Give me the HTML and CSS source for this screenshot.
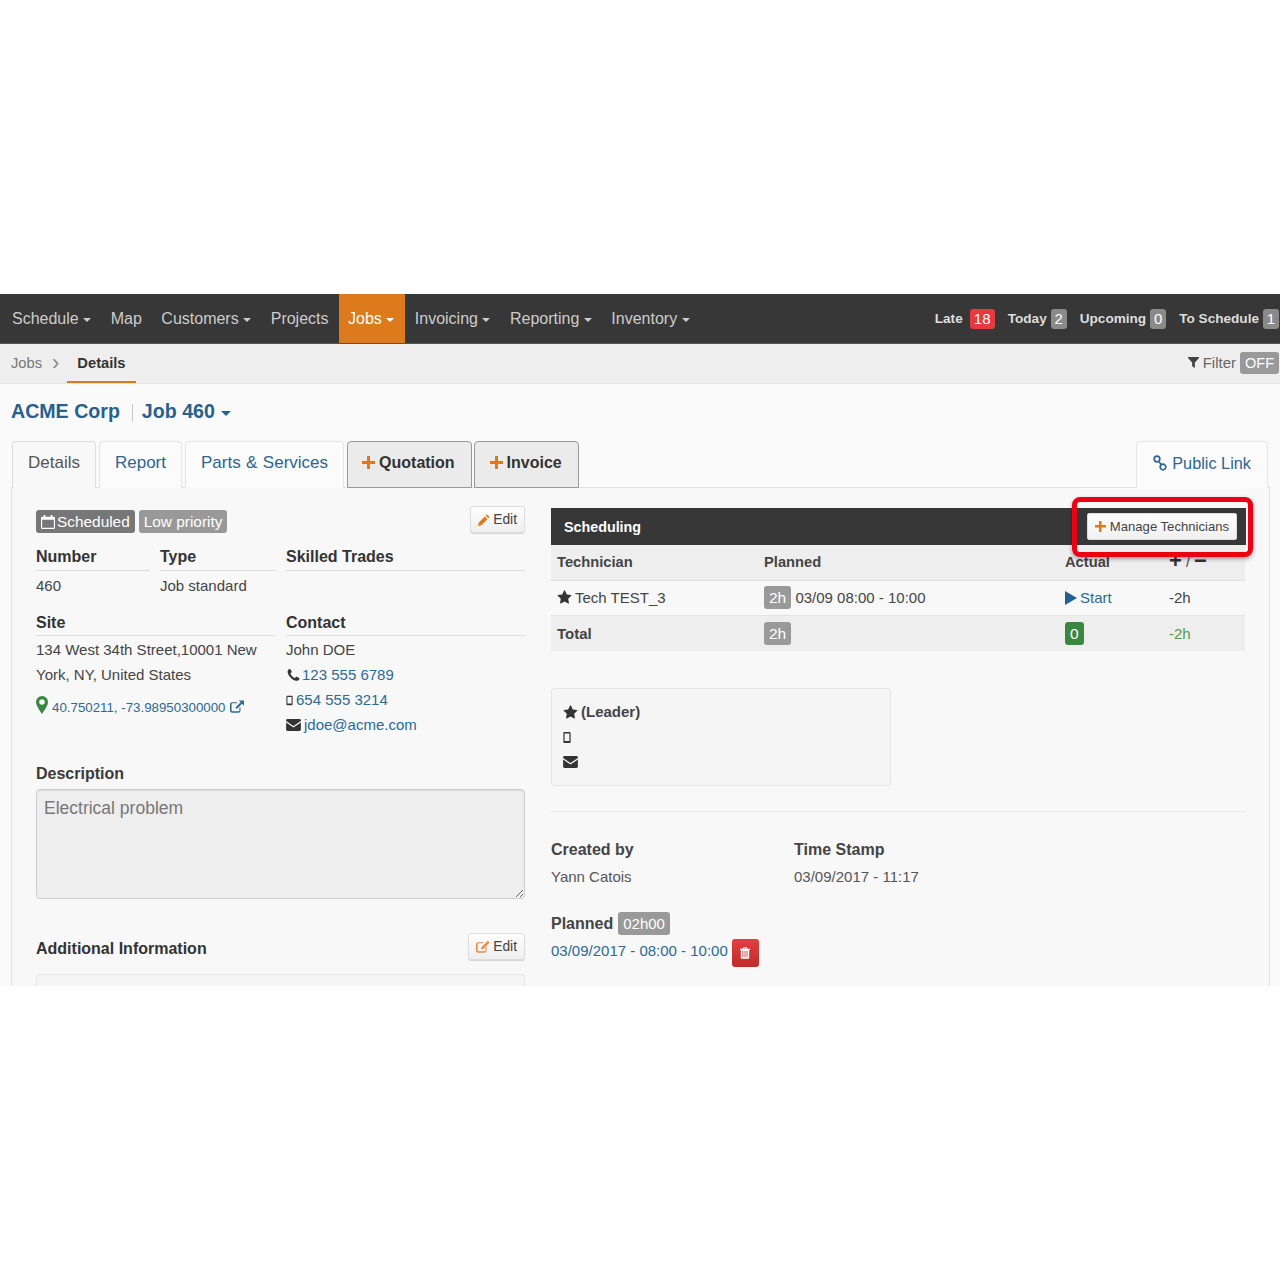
FILE: index.html
```html
<!DOCTYPE html>
<html lang="en">
<head>
<meta charset="utf-8">
<title>Job 460</title>
<link rel="stylesheet" href="styles.css">
</head>
<body>
<svg class="defs" width="0" height="0" aria-hidden="true">
  <symbol id="i-star" viewBox="0 0 1792 1792"><path d="M1728 647q0 22-26 48l-363 354 86 500q1 7 1 20 0 21-10.500 35.500T1385 1619q-19 0-40-12l-449-236-449 236q-22 12-40 12-21 0-31.500-14.500T365 1569q0-6 2-20l86-500L89 695q-25-27-25-48 0-37 56-46l502-73L847 73q19-41 49-41t49 41l225 455 502 73q56 9 56 46z"/></symbol>
  <symbol id="i-phone" viewBox="0 0 1792 1792"><path d="M1600 1240q0 27-10 70.500t-21 68.500q-21 50-122 106-94 51-186 51-27 0-53-3.500t-57.500-12.500-47-14.500-55.500-20.500-49-18q-98-35-175-83-127-79-264-216T344 904q-48-77-83-175-3-9-18-49t-20.500-55.500-14.500-47T195.500 520 192 467q0-92 51-186 56-101 106-122 25-11 68.500-21t70.500-10q14 0 21 3 18 6 53 76 11 19 30 54t35 63.500 31 53.500q3 4 17.500 25t21.500 35.500 7 28.500q0 20-28.500 50t-62 55-62 53-28.500 46q0 9 5 22.500t8.500 20.500 14 24 11.500 19q76 137 174 235t235 174q2 1 19 11.500t24 14 20.500 8.500 22.500 5q18 0 46-28.500t53-62 55-62 50-28.500q14 0 28.500 7t35.500 21.500 25 17.500q25 15 53.500 31t63.500 35 54 30q70 35 76 53 3 7 3 21z"/></symbol>
  <symbol id="i-mobile" viewBox="0 0 10 16"><path fill-rule="evenodd" d="M2 1h6a1.500 1.500 0 0 1 1.500 1.500v11A1.500 1.500 0 0 1 8 15H2a1.500 1.500 0 0 1-1.500-1.500v-11A1.500 1.500 0 0 1 2 1zm0 2v9.500h6V3z"/></symbol>
  <symbol id="i-env" viewBox="0 0 16 13"><path d="M1.500 0h13A1.500 1.500 0 0 1 16 1.500v.6L8 7.500 0 2.100v-.6A1.500 1.500 0 0 1 1.500 0z"/><path d="M0 3.900V11.500A1.500 1.500 0 0 0 1.500 13h13a1.500 1.500 0 0 0 1.500-1.500V3.900L8 9.300z"/></symbol>
  <symbol id="i-pin" viewBox="0 0 12 18"><path fill-rule="evenodd" d="M6 0a6 6 0 0 1 6 6c0 3-3.500 8.500-6 12C3.500 14.500 0 9 0 6a6 6 0 0 1 6-6zm0 3.200a2.800 2.800 0 1 0 0 5.600 2.800 2.800 0 0 0 0-5.600z"/></symbol>
  <symbol id="i-ext" viewBox="0 0 16 14"><path d="M2.500 2H8v1.300H2.800a1 1 0 0 0-1 1v7a1 1 0 0 0 1 1h7a1 1 0 0 0 1-1V8H12v3.500A2.500 2.500 0 0 1 9.500 14h-7A2.500 2.500 0 0 1 0 11.500v-7A2.500 2.500 0 0 1 2.500 2z"/><path d="M10 0h6v6l-2.200-2.200-6 6-1.600-1.600 6-6z"/></symbol>
  <symbol id="i-cal" viewBox="0 0 16 16"><path fill-rule="evenodd" d="M3 0h2v2h6V0h2v2h1.500A1.500 1.500 0 0 1 16 3.500v11a1.500 1.500 0 0 1-1.500 1.500h-13A1.500 1.500 0 0 1 0 14.500v-11A1.500 1.500 0 0 1 1.500 2H3zM1.300 5.500v9.200h13.400V5.500z"/></symbol>
  <symbol id="i-filter" viewBox="0 0 12 12"><path d="M0 0h12v1L7.500 6v6L4.500 10V6L0 1z"/></symbol>
  <symbol id="i-link" viewBox="0 0 16 16"><path fill="none" stroke="currentColor" stroke-width="1.700" d="M5 1.200a2.800 2.800 0 1 1 0 5.600 2.800 2.800 0 0 1 0-5.600zM11 9.200a2.800 2.800 0 1 1 0 5.600 2.800 2.800 0 0 1 0-5.600zM6 6l4 4"/></symbol>
  <symbol id="i-pencil" viewBox="0 0 14 14"><path d="M10.500 0.500 13.500 3.500 12 5 9 2zM8 3l3 3-7 7-4 1 1-4z"/></symbol>
  <symbol id="i-edit" viewBox="0 0 16 14"><path d="M2.500 2H9L7.700 3.300H2.800a1 1 0 0 0-1 1v7a1 1 0 0 0 1 1h7a1 1 0 0 0 1-1V8L12 6.700v4.800A2.500 2.500 0 0 1 9.500 14h-7A2.500 2.500 0 0 1 0 11.500v-7A2.500 2.500 0 0 1 2.500 2z"/><path d="M13.500 0.500 15.500 2.500 8 10H6V8z"/></symbol>
  <symbol id="i-trash" viewBox="0 0 12 14"><path fill-rule="evenodd" d="M4 0h4l1 2h3v1.300h-1V13a1 1 0 0 1-1 1H2a1 1 0 0 1-1-1V3.300H0V2h3zM4.500 1.200 4.100 2h3.800l-.4-.8zM3 4.500V12h1V4.500zm2.500 0V12h1V4.500zm2.500 0V12h1V4.500z"/></symbol>
</svg>

<div class="app">
  <nav class="topnav">
    <ul class="menu">
      <li class="menu-item">Schedule<span class="caret"></span></li>
      <li class="menu-item">Map</li>
      <li class="menu-item">Customers<span class="caret"></span></li>
      <li class="menu-item">Projects</li>
      <li class="menu-item active">Jobs<span class="caret"></span></li>
      <li class="menu-item">Invoicing<span class="caret"></span></li>
      <li class="menu-item">Reporting<span class="caret"></span></li>
      <li class="menu-item">Inventory<span class="caret"></span></li>
    </ul>
    <div class="counters">
      <span class="counter">Late <b class="count red wide">18</b></span>
      <span class="counter">Today <b class="count">2</b></span>
      <span class="counter">Upcoming <b class="count">0</b></span>
      <span class="counter">To Schedule <b class="count">1</b></span>
    </div>
  </nav>

  <div class="subbar">
    <div class="crumbs">
      <span class="crumb">Jobs</span>
      <span class="crumb-sep">›</span>
      <span class="crumb-current">Details</span>
    </div>
    <div class="filter">
      <svg class="ic ic-filter"><use href="#i-filter"/></svg>
      <span>Filter</span>
      <span class="off">OFF</span>
    </div>
  </div>

  <main class="content">
    <h1 class="title">
      <span>ACME Corp</span><span class="title-sep"></span><span>Job 460</span><span class="caret caret-title"></span>
    </h1>

    <div class="tabs">
      <a class="tab current">Details</a>
      <a class="tab">Report</a>
      <a class="tab parts">Parts &amp; Services</a>
      <a class="tab action"><span class="plus"></span>Quotation</a>
      <a class="tab action invoice"><span class="plus"></span>Invoice</a>
      <a class="tab public"><svg class="ic ic-link"><use href="#i-link"/></svg>Public Link</a>
    </div>

    <section class="panel">
      <div class="col-left">
        <div class="status-row">
          <div class="statuses">
            <span class="tag dark"><svg class="ic ic-cal"><use href="#i-cal"/></svg>Scheduled</span>
            <span class="tag">Low priority</span>
          </div>
          <button class="btn-edit"><svg class="ic ic-pencil"><use href="#i-pencil"/></svg>Edit</button>
        </div>

        <div class="fields three">
          <div><h3 class="field-head">Number</h3><p class="line">460</p></div>
          <div><h3 class="field-head">Type</h3><p class="line">Job standard</p></div>
          <div><h3 class="field-head">Skilled Trades</h3></div>
        </div>

        <div class="fields two">
          <div>
            <h3 class="field-head">Site</h3>
            <p class="line">134 West 34th Street,10001 New York, NY, United States</p>
            <p class="geo"><svg class="ic ic-pin"><use href="#i-pin"/></svg><a class="link">40.750211, -73.98950300000</a><svg class="ic ic-ext"><use href="#i-ext"/></svg></p>
          </div>
          <div>
            <h3 class="field-head">Contact</h3>
            <p class="line">John DOE</p>
            <p class="line"><svg class="ic ic-phone"><use href="#i-phone"/></svg><a class="link">123 555 6789</a></p>
            <p class="line"><svg class="ic ic-mobile"><use href="#i-mobile"/></svg><a class="link">654 555 3214</a></p>
            <p class="line"><svg class="ic ic-env"><use href="#i-env"/></svg><a class="link">jdoe@acme.com</a></p>
          </div>
        </div>

        <h3 class="desc-head">Description</h3>
        <textarea class="desc" readonly>Electrical problem</textarea>

        <div class="add-row">
          <h3 class="add-head">Additional Information</h3>
          <button class="btn-edit"><svg class="ic ic-edit"><use href="#i-edit"/></svg>Edit</button>
        </div>
        <div class="add-box"></div>
      </div>

      <div class="col-right">
        <div class="sched-bar">
          <span class="sched-title">Scheduling</span>
          <button class="btn-manage"><span class="plus small"></span>Manage Technicians</button>
          <span class="highlight"></span>
        </div>
        <table class="sched-table">
          <colgroup><col class="c1"><col class="c2"><col class="c3"><col class="c4"></colgroup>
          <thead>
            <tr><th>Technician</th><th>Planned</th><th>Actual</th><th class="pm"><span class="sym">+</span> / <span class="sym">−</span></th></tr>
          </thead>
          <tbody>
            <tr>
              <td><svg class="ic ic-star"><use href="#i-star"/></svg>Tech TEST_3</td>
              <td><span class="hours">2h</span> 03/09 08:00 - 10:00</td>
              <td class="start"><span class="play"></span>Start</td>
              <td>-2h</td>
            </tr>
            <tr class="total">
              <td class="strong">Total</td>
              <td><span class="hours">2h</span></td>
              <td><span class="hours green">0</span></td>
              <td class="delta">-2h</td>
            </tr>
          </tbody>
        </table>

        <div class="leader">
          <p class="leader-line strong"><svg class="ic ic-star"><use href="#i-star"/></svg>(Leader)</p>
          <p class="leader-line"><svg class="ic ic-mobile"><use href="#i-mobile"/></svg></p>
          <p class="leader-line"><svg class="ic ic-env"><use href="#i-env"/></svg></p>
        </div>

        <hr class="rule">

        <div class="meta">
          <div><h3 class="meta-head">Created by</h3><p class="meta-val">Yann Catois</p></div>
          <div><h3 class="meta-head">Time Stamp</h3><p class="meta-val">03/09/2017 - 11:17</p></div>
        </div>

        <div class="planned">
          <h3 class="meta-head inline">Planned</h3><span class="hours long">02h00</span>
        </div>
        <div class="planned-date">
          <a class="link">03/09/2017 - 08:00 - 10:00</a>
          <button class="btn-trash"><svg class="ic ic-trash"><use href="#i-trash"/></svg></button>
        </div>
      </div>
    </section>
  </main>
</div>
</body>
</html>
```

FILE: styles.css
```css
* { box-sizing: border-box; }
html, body { margin: 0; background: #fff; }
body {
  padding-top: 294px;
  font-family: "Liberation Sans", Arial, sans-serif;
  font-size: 15px;
  color: #444;
}
.defs { position: absolute; }
h1, h3, p, ul { margin: 0; padding: 0; }
ul { list-style: none; }
.ic { display: inline-block; fill: currentColor; vertical-align: middle; }

.app { height: 692px; overflow: hidden; background: #fafafa; }

/* top nav */
.topnav {
  height: 50px;
  background: #373737;
  border-bottom: 1px solid #555;
  display: flex;
  justify-content: space-between;
}
.menu { display: flex; }
.menu-item {
  padding: 0 10px 0 9.500px;
  line-height: 49px;
  font-size: 16px;
  color: #ccc;
}
.menu-item:first-child { padding-left: 12px; }
.menu-item.active { background: #dc7a1c; color: #fff; padding-right: 11px; }
.caret {
  display: inline-block;
  width: 0; height: 0;
  margin-left: 4.500px;
  vertical-align: middle;
  border-top: 4px solid currentColor;
  border-left: 4px solid transparent;
  border-right: 4px solid transparent;
}
.counters { display: flex; align-items: center; gap: 13px; padding-right: 1px; }
.counter { font-size: 13.600px; font-weight: bold; color: #ddd; display: flex; align-items: center; gap: 4px; }
.count {
  background: #8a8a8a; color: #fff;
  border-radius: 3px;
  font-size: 15px; font-weight: normal;
  line-height: 20px; width: 16px; text-align: center;
}
.count.red { background: #e53a40; }
.count.wide { width: 25px; margin-left: 3px; }

/* sub bar */
.subbar {
  height: 40px;
  background: #eee;
  border-bottom: 1px solid #e4e4e4;
  display: flex;
  justify-content: space-between;
}
.crumbs { display: flex; align-items: flex-start; padding-left: 11px; }
.crumb { line-height: 38px; color: #777; font-size: 14.700px; }
.crumb-sep { line-height: 38px; color: #888; font-size: 22px; margin: 0 18px 0 10px; }
.crumb-current {
  font-weight: bold; color: #333; font-size: 14.700px;
  line-height: 38px; height: 39px;
  padding: 0 10px; margin-left: -10px;
  border-bottom: 2px solid #dc7a1c;
}
.filter { display: flex; align-items: center; gap: 4px; color: #666; padding-right: 1px; padding-bottom: 2px; }
.ic-filter { width: 11px; height: 11px; color: #444; }
.off { background: #999; color: #fff; border-radius: 3px; line-height: 22px; padding: 0 5px; font-size: 14.500px; }

/* title + tabs */
.content { padding: 0 11px; }
.title {
  display: flex; align-items: center;
  height: 57px;
  padding-bottom: 2px;
  font-size: 19.600px; font-weight: bold; color: #28608c;
}
.title-sep { width: 1px; height: 18px; background: #c8c8c8; margin: 2px 9px 0 12px; }
.caret-title { margin-left: 6px; margin-top: 3px; border-top-width: 5px; border-left-width: 5px; border-right-width: 5px; }
.tabs { display: flex; height: 47px; padding-left: 1px; gap: 3px; position: relative; z-index: 1; }
.tab {
  display: flex; align-items: center;
  padding: 0 15px 4px;
  font-size: 17px;
  color: #2e6590;
  background: #fbfbfb;
  border: 1px solid #e6e6e6;
  border-bottom: 0;
  border-radius: 4px 4px 0 0;
}
.tab.current { color: #555; background: #f8f8f8; height: 47px; border-color: #ddd; }
.tab.parts { word-spacing: .7px; }
.tab.action {
  background: #ebebeb; color: #333;
  font-size: 16px; font-weight: bold;
  padding: 0 16px 4px 14px;
  border: 1px solid #999;
}
.tab.invoice { margin-left: -1px; padding: 0 16px 4px 15px; }
.tab.public { margin-left: auto; margin-right: 1px; font-size: 16.300px; padding-right: 16px; }
.plus {
  display: inline-block; width: 13px; height: 13px; margin-right: 4px;
  background:
    linear-gradient(#dc7a1c, #dc7a1c) center / 13px 3px no-repeat,
    linear-gradient(#dc7a1c, #dc7a1c) center / 3px 13px no-repeat;
}
.plus.small { width: 11px; height: 11px; margin-right: 4px; background-size: 11px 2.500px, 2.500px 11px; }
.ic-link { width: 16px; height: 16px; margin-right: 4px; }

/* panel */
.panel {
  margin: -1px -1px 0 0;
  background: #f8f8f8;
  border: 1px solid #e2e2e2;
  border-bottom: 0;
  height: 600px;
  padding: 20px 23px 0 24px;
  display: grid;
  grid-template-columns: 489px 695px;
  column-gap: 26px;
  align-items: start;
}

/* left */
.status-row { display: flex; justify-content: space-between; align-items: flex-start; height: 27px; }
.statuses { display: flex; gap: 4px; padding-top: 2px; }
.tag {
  display: flex; align-items: center;
  background: #999; color: #fff;
  border-radius: 3px;
  height: 23px; padding: 0 5px;
  font-size: 15.400px;
}
.tag.dark { background: #777; }
.ic-cal { width: 14px; height: 14px; margin-right: 2px; color: #fff; }
.btn-edit {
  display: flex; align-items: center;
  font: 13.800px "Liberation Sans", Arial, sans-serif;
  color: #444;
  height: 27px; padding: 0 7px;
  margin-top: -2px;
  background: linear-gradient(#fff, #eee);
  border: 1px solid #ddd;
  border-radius: 3px;
  box-shadow: 0 1px 1px rgba(0,0,0,.15);
}
.ic-pencil { width: 12px; height: 12px; color: #dc7a1c; margin-right: 3px; }
.ic-edit { width: 14px; height: 13px; color: #e58a42; margin-right: 3px; }

.fields { display: grid; }
.fields.three { grid-template-columns: 113.500px 115.500px 239px; margin-top: 9px; column-gap: 10.500px; height: 65px; }
.fields.two { grid-template-columns: 239px 239px; column-gap: 11px; height: 130px; }
.field-head {
  font-size: 16px; font-weight: bold; color: #333;
  line-height: 26px; height: 27px;
  border-bottom: 1px solid #ddd;
  margin-bottom: 2px;
}
.fields.two .field-head { line-height: 28px; margin-bottom: 1px; }
.line { line-height: 25px; font-size: 15px; color: #444; }
.link { color: #2c6a94; }
.geo { display: flex; align-items: center; margin-top: 13px; font-size: 13.300px; }
.ic-pin { width: 12px; height: 18px; color: #3c873f; margin-right: 4px; margin-top: -5px; }
.ic-ext { width: 14px; height: 13px; color: #2c6a94; margin-left: 4px; margin-top: -2px; }
.ic-phone { width: 15px; height: 15px; margin-right: 1px; margin-top: -2px; color: #333; }
.ic-mobile { width: 7px; height: 11px; margin: -2px 3px 0 0; color: #333; }
.ic-env { width: 15px; height: 12px; margin: -2px 3px 0 0; color: #333; }

.desc-head { font-size: 16px; font-weight: bold; color: #3a3a3a; margin-top: 21px; line-height: 28px; }
.desc {
  display: block;
  width: 489px; height: 110px;
  margin-top: 1px;
  padding: 6px 7px;
  background: #eee;
  border: 1px solid #ccc;
  border-radius: 4px;
  box-shadow: inset 0 1px 1px rgba(0,0,0,.08);
  font: 17.500px/24px "Liberation Sans", Arial, sans-serif;
  color: #777;
  outline: 0;
}
.add-row { display: flex; justify-content: space-between; align-items: center; margin-top: 34px; height: 27px; }
.add-row .btn-edit { margin-top: 0; }
.add-head { font-size: 16px; font-weight: bold; color: #333; padding-top: 4px; }
.add-box { height: 60px; margin-top: 14px; background: #f5f5f5; border: 1px solid #e6e6e6; border-radius: 3px; }

/* right */
.sched-bar {
  position: relative;
  height: 37px;
  background: #373737;
  display: flex; align-items: center; justify-content: space-between;
  padding: 0 9px 0 13px;
}
.sched-title { color: #fff; font-size: 14.300px; font-weight: bold; }
.btn-manage {
  display: flex; align-items: center;
  height: 27px; padding: 0 7px;
  font: 13.100px "Liberation Sans", Arial, sans-serif;
  color: #444;
  background: linear-gradient(#fff, #f0f0f0);
  border: 1px solid #ddd;
  border-radius: 2px;
}
.highlight {
  position: absolute;
  left: 521px; top: -11px;
  width: 181px; height: 60px;
  border: 5px solid #ec0014;
  border-radius: 8px;
  box-shadow: 0 2px 4px rgba(0,0,0,.35);
  pointer-events: none;
}
.sched-table { width: 694px; border-collapse: collapse; table-layout: fixed; font-size: 15px; color: #444; }
.c1 { width: 207px; } .c2 { width: 301px; } .c3 { width: 104px; } .c4 { width: 82px; }
.sched-table th, .sched-table td { text-align: left; padding: 0 6px; height: 35px; }
.sched-table th { font-weight: bold; font-size: 14.700px; color: #444; }
.sched-table thead tr { background: #eee; border-bottom: 1px solid #e0e0e0; }
.sched-table tbody tr:first-child { border-bottom: 1px solid #e4e4e4; }
.sched-table tbody tr:first-child td { padding-bottom: 1px; }
.sched-table .total td { height: 36px; }
.total { background: #eee; }
.strong { font-weight: bold; }
.sym { font-size: 22px; font-weight: bold; color: #333; line-height: 14px; vertical-align: -1px; }
.sched-table .pm { font-weight: normal; }
.ic-star { width: 15px; height: 15px; margin: -2px 3px 0 0; color: #333; }
.hours {
  display: inline-block;
  background: #999; color: #fff;
  border-radius: 3px;
  line-height: 23px; padding: 0 5px;
  font-size: 15.500px;
}
.hours.green { background: #3c873f; }
.hours.long { margin-left: 5px; font-size: 15px; }
.start { color: #2c6a94; }
.play {
  display: inline-block;
  width: 0; height: 0; margin-right: 3px;
  border-left: 12px solid #26608c;
  border-top: 7px solid transparent;
  border-bottom: 7px solid transparent;
  vertical-align: -2px;
}
.delta { color: #4f9a52; }
.leader {
  margin-top: 37px;
  width: 340px; height: 98px;
  background: #f5f5f5;
  border: 1px solid #e6e6e6;
  border-radius: 3px;
  padding: 10px 11px;
}
.leader-line { line-height: 25px; height: 25px; color: #444; }
.leader .ic-mobile { width: 8px; height: 13px; margin-left: 0; }
.rule { border: 0; border-top: 1px solid #eaeaea; margin: 25px 0 0; }
.meta { display: grid; grid-template-columns: 243px 1fr; margin-top: 25px; }
.meta-head { font-size: 16px; font-weight: bold; color: #444; line-height: 26px; }
.meta-val { line-height: 28px; font-size: 15px; color: #555; }
.meta-head.inline { display: inline; }
.planned { margin-top: 20px; height: 25px; }
.planned-date { display: flex; align-items: center; gap: 4px; height: 28px; margin-top: 3px; }
.planned-date .link { margin-top: -5px; }
.btn-trash {
  width: 27px; height: 28px; padding: 0;
  display: flex; align-items: center; justify-content: center;
  background: linear-gradient(#e0413f, #bd2c2a);
  border: 0; border-radius: 3px;
}
.ic-trash { width: 10px; height: 12px; color: #fff; }
```
